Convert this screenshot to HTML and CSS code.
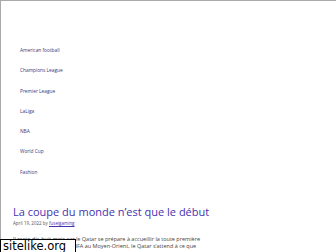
FILE: index.html
```html
<!DOCTYPE html>
<html lang="fr">
<head>
<meta charset="utf-8">
<link rel="stylesheet" href="styles.css">
</head>
<body>
<div class="frame">
  <nav class="menu">
    <a class="menu-item">American football</a>
    <a class="menu-item">Champions League</a>
    <a class="menu-item">Premier League</a>
    <a class="menu-item">LaLiga</a>
    <a class="menu-item">NBA</a>
    <a class="menu-item">World Cup</a>
    <a class="menu-item">Fashion</a>
  </nav>
  <article class="post">
    <h1 class="post-title">La coupe du monde n’est que le début</h1>
    <div class="post-meta">April 19, 2022 by <span class="author">fuseigaming</span></div>
    <p class="post-text">Il reste dix-huit mois car le Qatar se prépare à accueillir la toute première Coupe du monde de la FIFA au Moyen-Orient, le Qatar s’attend à ce que</p>
  </article>
</div>
<div class="badge">sitelike.org</div>
</body>
</html>
```
FILE: styles.css
```css
html, body {
  margin: 0;
  padding: 0;
  background: #fff;
}
body {
  width: 336px;
  height: 252px;
  overflow: hidden;
  position: relative;
  font-family: "Open Sans", "Liberation Sans", sans-serif;
}
.frame {
  height: 252px;
  box-sizing: border-box;
  border-top: 1px solid #a9a9a9;
  border-left: 1px solid #a9a9a9;
}
.menu {
  display: flex;
  flex-direction: column;
  padding: 45px 0 0 19px;
}
.menu-item {
  display: block;
  height: 20.3px;
  font-size: 4.8px;
  line-height: 8px;
  color: #3b3779;
}
.post {
  padding: 17px 0 0 12px;
}
.post-title {
  margin: 0;
  font-weight: 400;
  font-size: 11px;
  line-height: 14px;
  color: #4433b0;
}
.post-meta {
  margin-top: 1px;
  font-size: 4.5px;
  line-height: 6px;
  color: #555;
}
.author {
  color: #4433b0;
  text-decoration: underline;
}
.post-text {
  margin: 10px 0 0;
  width: 195px;
  font-size: 5.5px;
  line-height: 7px;
  color: #444;
}
.badge {
  position: absolute;
  left: 0;
  top: 239px;
  width: 76px;
  height: 14px;
  box-sizing: border-box;
  border: 1px solid #000;
  background: #fff;
  color: #000;
  font-family: "DejaVu Sans", sans-serif;
  font-size: 11.5px;
  line-height: 12px;
  padding-left: 2px;
}
```
